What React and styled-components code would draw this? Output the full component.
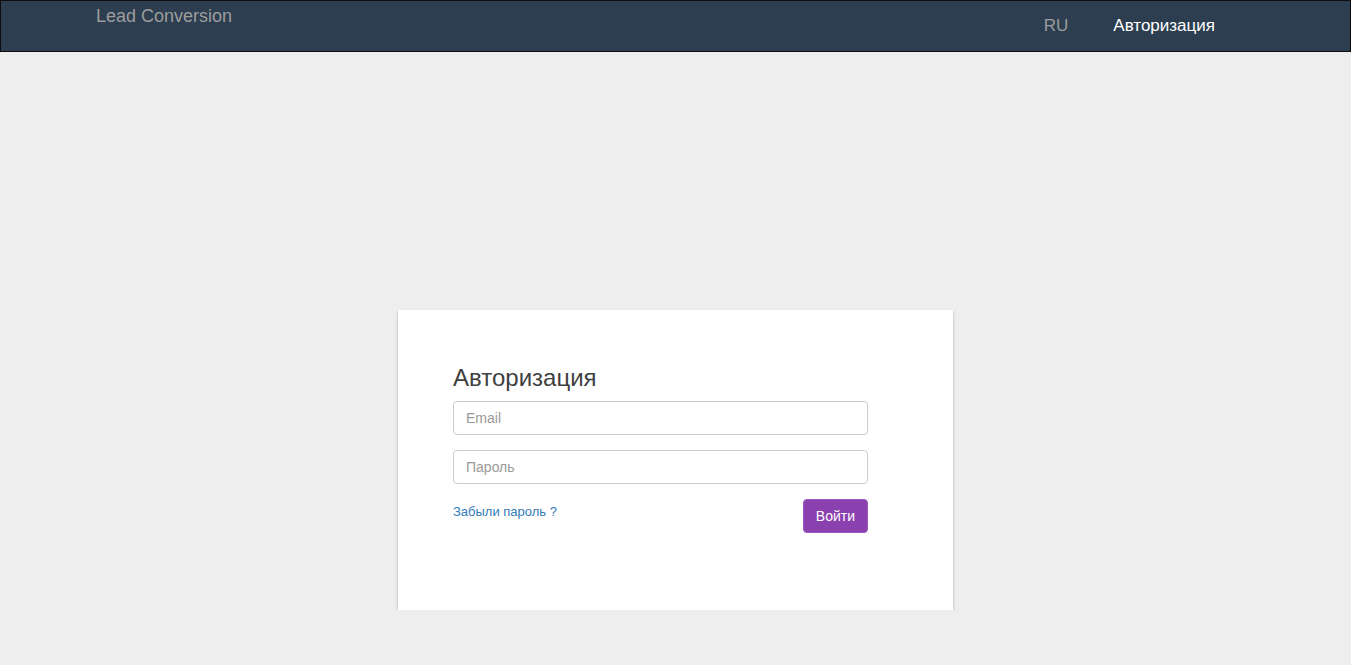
import React from "react";
import styled, { createGlobalStyle } from "styled-components";

const Global = createGlobalStyle`
  html, body { margin: 0; padding: 0; }
  body {
    background: #eeeeee;
    font-family: "Liberation Sans", Arial, sans-serif;
    font-size: 14px;
    color: #333;
  }
`;

const Navbar = styled.nav`
  box-sizing: border-box;
  height: 52px;
  background: #2c3e50;
  border: 1px solid #0d0d0d;
  display: flex;
  justify-content: space-between;
  align-items: flex-start;
  padding: 0 135px 0 95px;
`;

const Brand = styled.a`
  margin-top: 5px;
  font-size: 18px;
  line-height: 20px;
  color: #9d9d9d;
  text-decoration: none;
`;

const NavLinks = styled.div`
  display: flex;
  gap: 45px;
  margin-top: 15px;
`;

const NavLink = styled.a`
  font-size: 17px;
  line-height: 20px;
  color: ${(p) => (p.$active ? "#ffffff" : "#9d9d9d")};
  text-decoration: none;
`;

const Main = styled.main`
  display: flex;
  justify-content: center;
  padding-top: 258px;
`;

const Card = styled.div`
  box-sizing: border-box;
  width: 555px;
  height: 300px;
  background: #fff;
  box-shadow: 0 1px 1px rgba(0, 0, 0, 0.12), 0 2px 3px rgba(0, 0, 0, 0.22);
  padding: 55px 85px 0 55px;
`;

const Title = styled.h2`
  margin: 0 0 10px;
  font-size: 24px;
  line-height: 26px;
  font-weight: 400;
  color: #3f3f3f;
`;

const Form = styled.form`
  display: flex;
  flex-direction: column;
  gap: 15px;
`;

const Input = styled.input`
  box-sizing: border-box;
  width: 415px;
  height: 34px;
  padding: 6px 12px;
  border: 1px solid #ccc;
  border-radius: 4px;
  font-family: "Liberation Sans", Arial, sans-serif;
  font-size: 14px;
  color: #555;
  outline: none;
  &::placeholder { color: #999; }
`;

const Actions = styled.div`
  display: flex;
  justify-content: space-between;
  align-items: flex-start;
`;

const Forgot = styled.a`
  margin-top: 5px;
  font-size: 13px;
  line-height: 16px;
  color: #337ab7;
  text-decoration: none;
`;

const Submit = styled.button`
  box-sizing: border-box;
  height: 34px;
  padding: 0 12px;
  background: #8b40b0;
  border: 1px solid #9a55c4;
  border-radius: 4px;
  color: #fff;
  font-family: "Liberation Sans", Arial, sans-serif;
  font-size: 14px;
  cursor: pointer;
`;

export default function App() {
  return (
    <>
      <Global />
      <Navbar>
        <Brand href="#">Lead Conversion</Brand>
        <NavLinks>
          <NavLink href="#">RU</NavLink>
          <NavLink href="#" $active>Авторизация</NavLink>
        </NavLinks>
      </Navbar>
      <Main>
        <Card>
          <Title>Авторизация</Title>
          <Form onSubmit={(e) => e.preventDefault()}>
            <Input type="email" placeholder="Email" />
            <Input type="password" placeholder="Пароль" />
            <Actions>
              <Forgot href="#">Забыли пароль ?</Forgot>
              <Submit type="submit">Войти</Submit>
            </Actions>
          </Form>
        </Card>
      </Main>
    </>
  );
}
